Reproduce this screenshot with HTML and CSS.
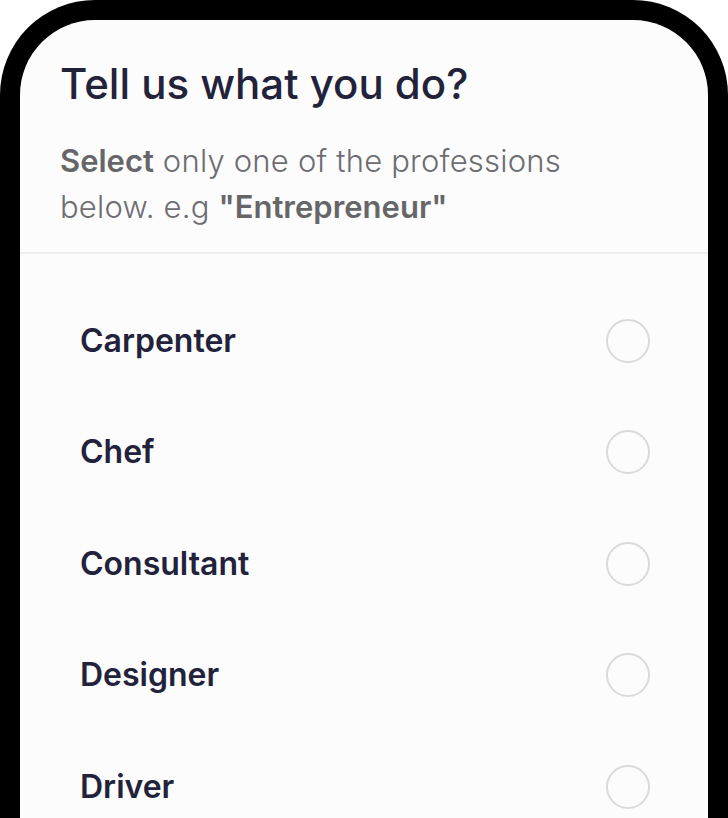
FILE: index.html
```html
<!DOCTYPE html>
<html lang="en">
<head>
<meta charset="utf-8">
<title>Tell us what you do?</title>
<link rel="stylesheet" href="styles.css">
</head>
<body>
<div class="phone">
  <div class="screen">
    <header class="head">
      <h1 class="title">Tell us what you do?</h1>
      <p class="sub"><b>Select</b> only one of the professions below. e.g <b>"Entrepreneur"</b></p>
    </header>
    <ul class="list">
      <li class="row"><span class="label">Carpenter</span><span class="radio"></span></li>
      <li class="row"><span class="label">Chef</span><span class="radio"></span></li>
      <li class="row"><span class="label">Consultant</span><span class="radio"></span></li>
      <li class="row"><span class="label">Designer</span><span class="radio"></span></li>
      <li class="row"><span class="label">Driver</span><span class="radio"></span></li>
    </ul>
  </div>
</div>
</body>
</html>
```

FILE: styles.css
```css
html, body {
  margin: 0;
  padding: 0;
  background: #ffffff;
  overflow: hidden;
}
.phone {
  width: 728px;
  height: 818px;
  box-sizing: border-box;
  border: 20px solid #000;
  border-bottom: none;
  border-radius: 95px 95px 0 0;
  overflow: hidden;
  background: #fcfcfc;
}
.screen {
  font-family: Inter, "Noto Sans", sans-serif;
}
.head {
  padding: 40px 40px 22px 40px;
  border-bottom: 2px solid #eeeeee;
}
.title {
  margin: 0;
  font-size: 42px;
  line-height: 48px;
  font-weight: 500;
  color: #22223a;
}
.sub {
  margin: 30px 0 0 0;
  font-size: 31px;
  line-height: 46px;
  font-weight: 300;
  color: #6d6d72;
  letter-spacing: 0.2px;
  max-width: 540px;
}
.sub b {
  font-weight: 600;
  color: #666669;
  letter-spacing: 0;
}
.list {
  list-style: none;
  margin: 0;
  padding: 31px 58px 0 60px;
}
.row {
  height: 111.5px;
  display: flex;
  align-items: center;
  justify-content: space-between;
}
.label {
  font-size: 32px;
  line-height: 40px;
  font-weight: 600;
  color: #22223a;
}
.radio {
  width: 44px;
  height: 44px;
  box-sizing: border-box;
  border: 2px solid #dadada;
  border-radius: 50%;
}
```
